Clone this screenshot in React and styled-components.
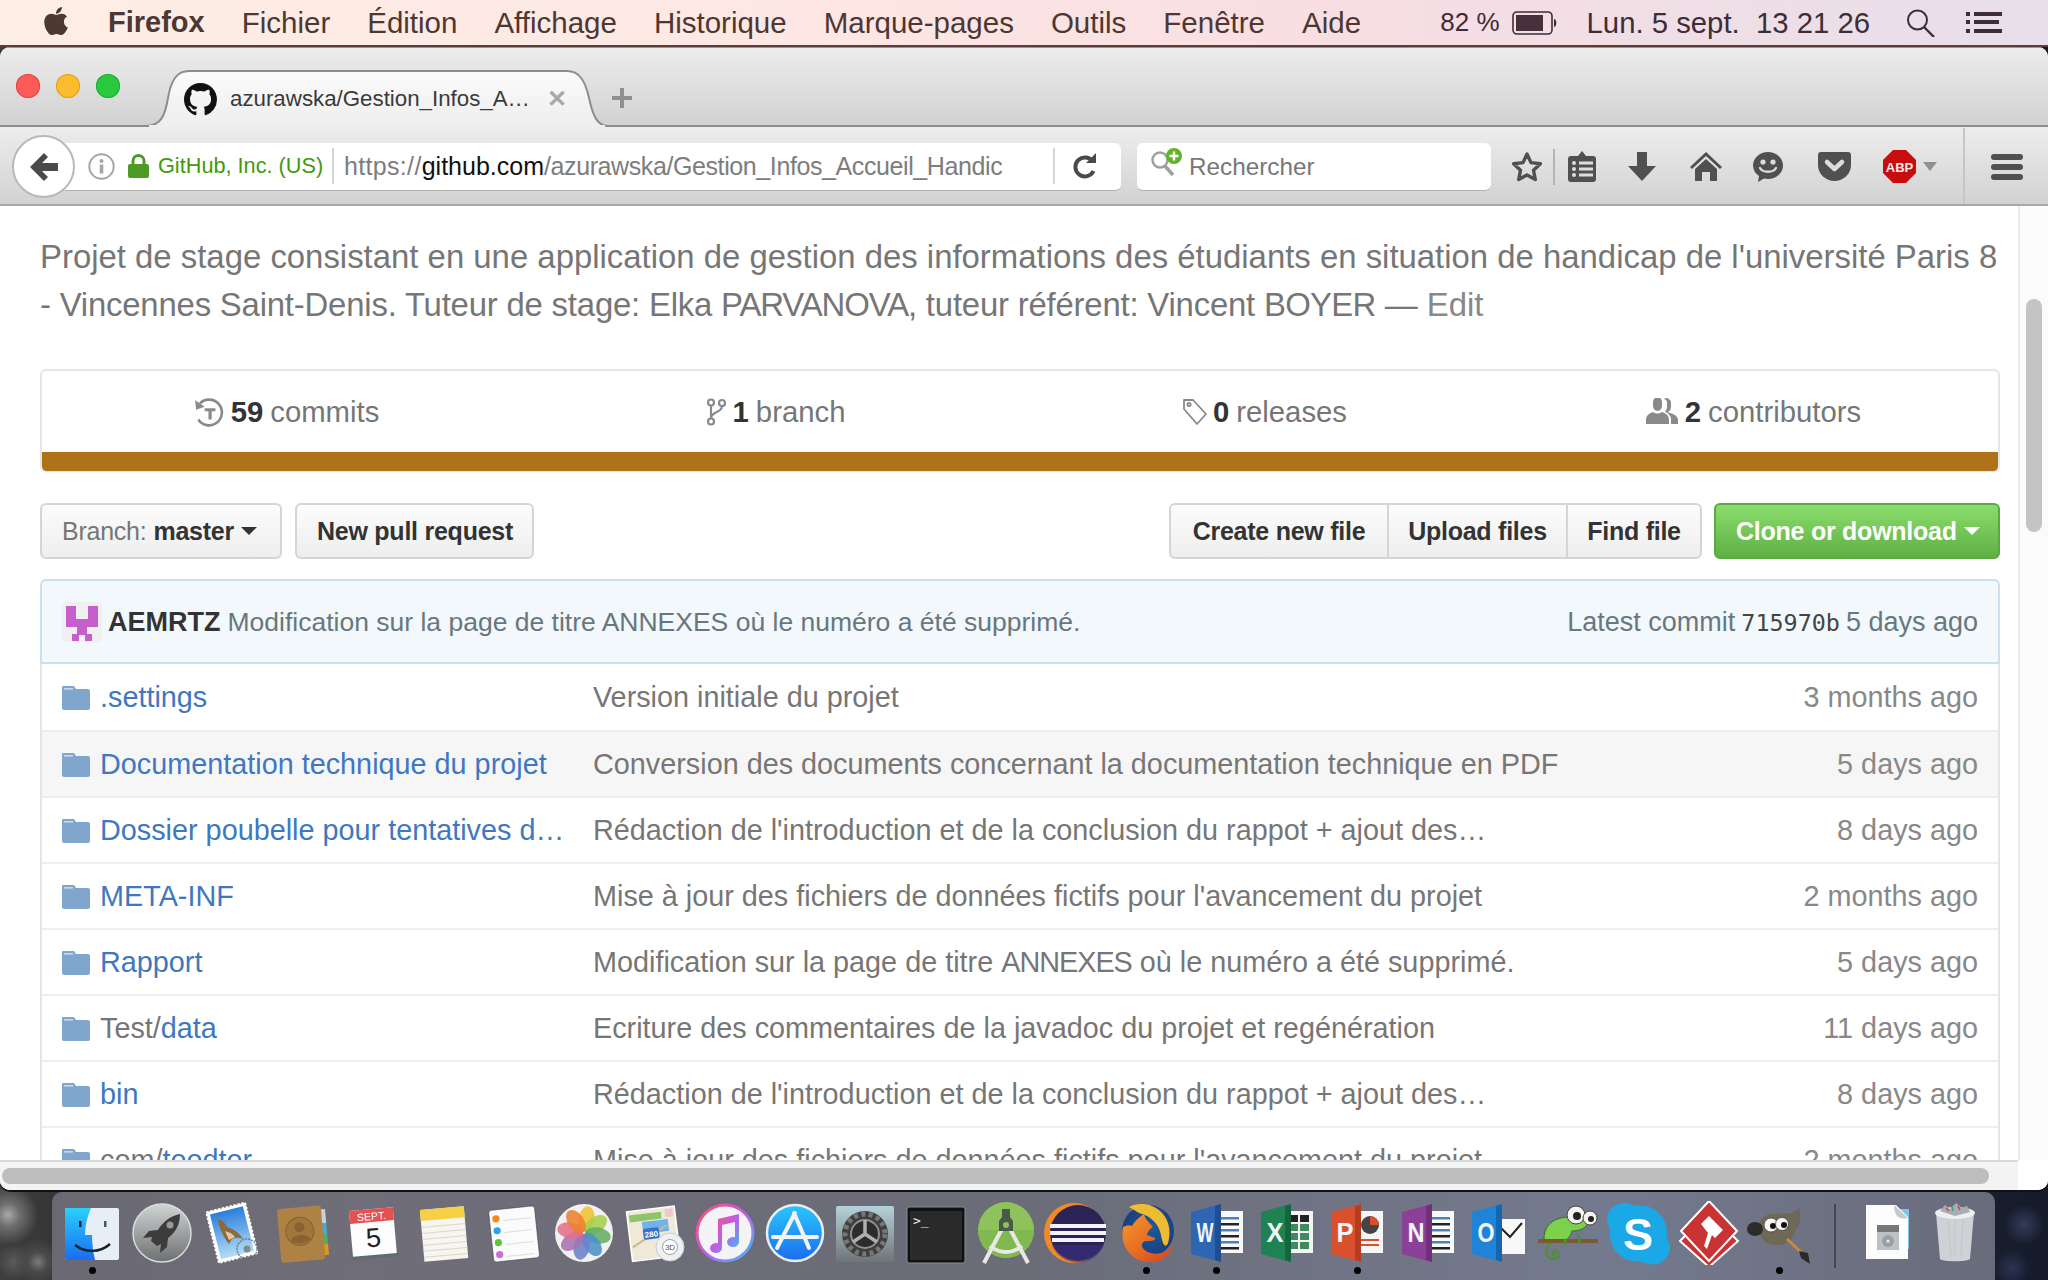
import React from "react";
import styled, { createGlobalStyle } from "styled-components";
import { FaApple } from "react-icons/fa";

const Global = createGlobalStyle`
  html, body { margin: 0; padding: 0; }
  body { width: 2048px; height: 1280px; overflow: hidden; font-family: "Liberation Sans", Arial, sans-serif; }
  * { box-sizing: border-box; }
`;

const Desktop = styled.div`
  width: 2048px; height: 1280px; overflow: hidden; display: flex; flex-direction: column;
  background:
    radial-gradient(circle at 8px 1215px, #a9a9a9 0, #6d6d6d 12px, transparent 30px),
    radial-gradient(circle at 38px 1262px, #7a7a7a 0, #4a4a4a 10px, transparent 24px),
    radial-gradient(circle at 14px 1262px, #5a5a5a 0, transparent 18px),
    radial-gradient(circle at 2024px 1225px, #333c5a 0, transparent 20px),
    radial-gradient(circle at 2012px 1268px, #2b3552 0, transparent 18px),
    linear-gradient(90deg, #3e3e3e 0, #353536 52px, #1d2233 1900px, #161b2c 100%);
`;

/* ---------- macOS menu bar ---------- */
const MenuBar = styled.div`
  height: 47px; flex: none; display: flex; align-items: center; padding: 0 46px 0 42px;
  font-size: 29.5px; color: #4c3732; border-bottom: 2px solid #5c3d3a;
  background: linear-gradient(90deg, #fdeee4 0, #fee8e4 35%, #f9dfe2 62%, #f3dee4 75%, #e7dfea 100%);
`;
const AppleMark = styled(FaApple)`width: 28px; height: 32px; margin: -4px 38px 0 0; color: #4c3a32;`;
const MenuItem = styled.span`
  margin-right: ${p => p.$gap ?? 37}px; font-weight: ${p => (p.$bold ? 700 : 400)}; white-space: nowrap;
  font-size: ${p => (p.$bold ? 29 : 29.5)}px;
`;
const MenuStatus = styled.div`margin-left: auto; display: flex; align-items: center; color: #3d2d38; font-size: 29.3px;`;
const StatusText = styled.span`margin-right: ${p => p.$gap}px; white-space: nowrap; font-size: ${p => p.$fs || 29.3}px;`;
const StatusIcon = styled.svg`display: block; flex: none; margin-right: ${p => p.$gap || 0}px;`;

/* ---------- Firefox window ---------- */
const Window = styled.div`
  width: 2048px; height: 1143px; flex: none; display: flex; flex-direction: column; overflow: hidden;
  border-radius: 10px 10px 10px 10px; background: #fff; box-shadow: 0 2px 0 #111;
`;
const TabBar = styled.div`
  height: 80px; flex: none; display: flex; align-items: flex-end; padding-left: 16px; position: relative;
  border-top: 1px solid #b9897d; border-bottom: 2px solid #8d8d8d;
  background: linear-gradient(#ececec, #d2d2d2);
`;
const Lights = styled.div`display: flex; gap: 16px; align-self: flex-start; margin: 26px 27px 0 0;`;
const Light = styled.span`
  width: 24px; height: 24px; border-radius: 50%; background: ${p => p.$c}; box-shadow: inset 0 0 0 1px ${p => p.$b};
`;
const Tab = styled.div`
  position: relative; width: 460px; height: 57px; margin-bottom: -2px; display: flex; align-items: center;
  padding: 1px 0 0 37px; color: #3a3a3a; font-size: 22.3px; z-index: 1;
`;
const TabShape = styled.svg`position: absolute; left: 0; top: 0; z-index: -1;`;
const TabTitle = styled.span`margin-left: 13px; width: 305px; white-space: nowrap; overflow: hidden;`;
const TabClose = styled.span`margin-left: 12px; color: #a8a8a8; font-size: 24px; font-weight: 700; line-height: 1;`;
const NewTab = styled.svg`margin: 0 0 17px 5px; display: block;`;

const NavBar = styled.div`
  height: 79px; flex: none; display: flex; align-items: center; position: relative;
  border-bottom: 2px solid #a8a8a8; padding-top: 2px;
  background: linear-gradient(#ededed, #d2d2d2);
`;
const BackButton = styled.div`
  width: 63px; height: 63px; margin-left: 12px; border-radius: 50%; background: #fff; flex: none; z-index: 1;
  border: 2px solid #b8b8b8; display: flex; align-items: center; justify-content: center;
`;
const UrlBar = styled.div`
  width: 1056px; height: 48px; margin-left: -10px; flex: none; display: flex; align-items: center;
  background: #fff; border-radius: 0 6px 6px 0; border-bottom: 1px solid #b0b0b0; padding-left: 23px;
`;
const SiteName = styled.span`color: #3f9a0c; font-size: 21.7px; margin-left: 9px; white-space: nowrap; width: 164px; flex: none;`;
const UrlSep = styled.span`width: 2px; height: 36px; background: #d4d4d4; flex: none; margin-left: ${p => p.$m}px;`;
const UrlText = styled.div`
  width: 658px; margin-left: 10px; overflow: hidden; white-space: nowrap; font-size: 25px; color: #7d7d7d; flex: none;
  padding-top: 1px; letter-spacing: -0.4px;
  b { font-weight: 400; color: #111; letter-spacing: 0; }
`;
const UrlScheme = styled.span`letter-spacing: 0.33px;`;
const SearchBox = styled.div`
  width: 354px; height: 48px; margin-left: 16px; flex: none; display: flex; align-items: center;
  background: #fff; border-radius: 6px; border-bottom: 1px solid #b0b0b0; padding-left: 13px;
  color: #777; font-size: 24.3px;
`;
const SearchLabel = styled.span`margin-left: 5px; padding-top: 1px;`;
const Slot = styled.div`
  width: ${p => p.$w}px; flex: none; display: flex; justify-content: center; align-items: center; position: relative;
  margin-left: ${p => p.$ml || 0}px;
`;
const ToolSep = styled.span`
  width: 2px; height: 36px; background: #b4b4b4; flex: none; margin-left: -1px; margin-right: -1px; z-index: 1;
`;
const NavDivider = styled.span`
  width: 2px; height: 76px; background: #c6c6c6; flex: none; margin-top: -2px; margin-left: 13px;
`;

/* ---------- GitHub page ---------- */
const PageRow = styled.div`flex: 1; min-height: 0; display: flex;`;
const Page = styled.div`
  width: 2018px; flex: none; overflow: hidden; padding: 27px 18px 0 40px; background: #fff;
  color: #333; font-size: 28.8px;
`;
const Description = styled.div`font-size: 32.9px; line-height: 48px; color: #767676; margin-bottom: 40px; width: 1960px;`;
const DescTail = styled.span`letter-spacing: -0.2px;`;
const Caps = styled.span`letter-spacing: ${p => p.$ls}px;`;
const EditLink = styled.span`color: #888;`;
const Stats = styled.div`
  height: 103px; border: 2px solid #e5e5e5; border-bottom-width: 1px; border-radius: 6px; overflow: hidden; display: flex; flex-direction: column;
`;
const StatCells = styled.div`flex: 1; display: flex;`;
const StatCell = styled.div`
  flex: 1; display: flex; align-items: center; justify-content: center; color: #767676; padding-top: 1px; font-size: 29.3px;
  b { color: #333; margin-right: 7px; }
  svg { margin-right: ${p => p.$gap || 7}px; }
`;
const LangBar = styled.div`height: 19px; background: #b07219; flex: none;`;
const Actions = styled.div`display: flex; margin-top: 31px; height: 56px;`;
const Btn = styled.div`
  height: 56px; padding: 0 ${p => p.$px ?? 20}px; display: flex; align-items: center; white-space: nowrap;
  font-size: 25px; letter-spacing: -0.25px; font-weight: 700; color: #333; border: 2px solid #d5d5d5; border-radius: 6px;
  width: ${p => p.$w}px; margin-left: ${p => p.$ml || 0}px;
  background: linear-gradient(#fcfcfc, #eee);
  span { color: #767676; font-weight: 400; margin-right: 7px; }
`;
const Caret = styled.i`
  width: 0; height: 0; margin-left: 7px; border-style: solid; border-width: 8px 8px 0; border-color: ${p => p.$c} transparent transparent;
`;
const BtnGroup = styled.div`display: flex; margin-left: auto;`;
const GroupBtn = styled(Btn)`
  border-radius: ${p => p.$r}; margin-left: ${p => (p.$first ? 0 : -2)}px; justify-content: center; padding: 0;
`;
const CloneBtn = styled(Btn)`
  color: #fff; border-color: #5ca941; background: linear-gradient(#8add6d, #60b044); margin-left: 12px; padding: 0 0 0 20px;
`;
const FileBox = styled.div`margin-top: 20px;`;
const CommitTease = styled.div`
  height: 85px; display: flex; align-items: center; padding: 1px 20px 0; font-size: 26.5px; color: #68777d;
  background: #f2f8fc; border: 2px solid #c9e1ee; border-radius: 6px 6px 0 0;
  b { color: #333; margin: 0 7px 0 6px; font-size: 27px; }
`;
const CommitMeta = styled.span`margin-left: auto; white-space: nowrap; font-size: 27px;`;
const Sha = styled.span`font-family: "DejaVu Sans Mono", monospace; font-size: 23.4px; color: #444; margin: 0 6px;`;
const Rows = styled.div`border-left: 2px solid #e5e5e5; border-right: 2px solid #e5e5e5;`;
const FileRow = styled.div`
  height: 66px; display: flex; align-items: center; padding: 1px 20px 0 20px; border-top: ${p => (p.$first ? 0 : 2)}px solid #eee;
  background: ${p => (p.$hover ? "#f6f6f6" : "#fff")};
`;
const FileName = styled.div`
  width: 493px; flex: none; margin-left: 10px; overflow: hidden; white-space: nowrap; text-overflow: ellipsis;
  color: #4078c0; padding-right: 28px;
  em { font-style: normal; color: #767676; }
`;
const FileMsg = styled.div`flex: 1; color: #767676; white-space: nowrap; overflow: hidden;`;
const FileAge = styled.div`color: #888; white-space: nowrap;`;

const VTrack = styled.div`flex: 1; background: #fbfbfb; border-left: 2px solid #e9e9e9; padding: 93px 6px 0 6px;`;
const VThumb = styled.div`width: 16px; height: 233px; border-radius: 8px; background: #c4c4c4;`;
const HRow = styled.div`height: 30px; flex: none; display: flex; background: #fff;`;
const HTrack = styled.div`
  width: 2018px; padding: 6px 29px 6px 2px; border-top: 2px solid #d9d9d9; background: #f4f4f4;
`;
const HThumb = styled.div`height: 16px; border-radius: 8px; background: #bdbdbd;`;

/* ---------- Dock ---------- */
const Dock = styled.div`
  width: 1943px; height: 88px; margin: 2px 0 0 52px; flex: none; display: flex; padding: 9px 0 0 5px;
  border-radius: 10px 10px 0 0;
  background: linear-gradient(90deg, #6a6872 0, #6f6d78 15%, #6a6c78 50%, #747a8e 80%, #686b7a 100%);
`;
const DockCell = styled.div`
  width: ${p => p.$w || 70.3}px; flex: none; display: flex; flex-direction: column; align-items: center;
`;
const DockDot = styled.span`
  width: 7px; height: 7px; border-radius: 50%; background: ${p => (p.$on ? "#000" : "transparent")}; margin-top: 2px; flex: none;
`;
const DockSep = styled.span`width: 2px; height: 64px; background: #44465a; margin: 3px 12px 0 20px; flex: none;`;

const Svg = ({ children, size = 64, ...r }) => (
  <svg width={size} height={size} viewBox="0 0 64 64" style={{ display: "block", flex: "none" }} {...r}>{children}</svg>
);

const GH = "M8 0C3.58 0 0 3.58 0 8c0 3.54 2.29 6.53 5.47 7.59.4.07.55-.17.55-.38 0-.19-.01-.82-.01-1.49-2.01.37-2.53-.49-2.69-.94-.09-.23-.48-.94-.82-1.13-.28-.15-.68-.52-.01-.53.63-.01 1.08.58 1.23.82.72 1.21 1.87.87 2.33.66.07-.52.28-.87.51-1.07-1.78-.2-3.64-.89-3.64-3.95 0-.87.31-1.59.82-2.15-.08-.2-.36-1.02.08-2.12 0 0 .67-.21 2.2.82.64-.18 1.32-.27 2-.27.68 0 1.36.09 2 .27 1.53-1.04 2.2-.82 2.2-.82.44 1.1.16 1.92.08 2.12.51.56.82 1.27.82 2.15 0 3.07-1.87 3.75-3.65 3.95.29.25.54.73.54 1.48 0 1.07-.01 1.93-.01 2.2 0 .21.15.46.55.38A8.013 8.013 0 0016 8c0-4.42-3.58-8-8-8z";

const Folder = () => (
  <svg width="28" height="24" viewBox="0 0 28 24" style={{ flex: "none", display: "block" }}>
    <path d="M1 0h11l2 3h12a2 2 0 012 2v17a2 2 0 01-2 2H2a2 2 0 01-2-2V1a1 1 0 011-1z" fill="#80a6cd" />
    <rect x="2" y="2" width="9" height="1.6" fill="#c9d9ea" />
  </svg>
);

/* ---------- toolbar icons ---------- */
const D = "#505050";
const Star = () => (
  <svg width="32" height="32" viewBox="0 0 32 32"><path d="M16 3l4 8.6 9.4 1.2-6.9 6.4 1.8 9.3L16 24l-8.3 4.5 1.8-9.3-6.9-6.4 9.4-1.2z" fill="none" stroke={D} strokeWidth="3.4" strokeLinejoin="round" /></svg>
);
const Clip = () => (
  <svg width="28" height="31" viewBox="0 0 28 31"><path d="M3 5h7l4-5 4 5h7a3 3 0 013 3v20a3 3 0 01-3 3H3a3 3 0 01-3-3V8a3 3 0 013-3z" fill={D} /><g fill="#ddd"><circle cx="6" cy="12" r="2" /><circle cx="6" cy="18" r="2" /><circle cx="6" cy="24" r="2" /><rect x="11" y="10.5" width="14" height="3" /><rect x="11" y="16.5" width="14" height="3" /><rect x="11" y="22.5" width="14" height="3" /></g></svg>
);
const Down = () => (
  <svg width="28" height="29" viewBox="0 0 28 29"><path d="M9 0h10v14h9L14 29 0 14h9z" fill={D} strokeLinejoin="round" /></svg>
);
const Home = () => (
  <svg width="32" height="29" viewBox="0 0 32 29"><path d="M16 0L0 15l2 2L16 4l14 13 2-2z" fill={D} /><path d="M16 7L5 17v12h7v-9h8v9h7V17z" fill={D} /></svg>
);
const Smile = () => (
  <svg width="30" height="30" viewBox="0 0 30 30"><path d="M15 0a15 13.5 0 0115 13.5A15 13.5 0 0115 27c-1.500 0-3-.2-4-.5L5 30l1-6A13.500 13.500 0 010 13.500 15 13.500 0 0115 0z" fill={D} /><circle cx="10" cy="10" r="2.600" fill="#ddd" /><circle cx="20" cy="10" r="2.600" fill="#ddd" /><path d="M7 16c3 5 13 5 16 0" stroke="#ddd" strokeWidth="2.400" fill="none" strokeLinecap="round" /></svg>
);
const Pocket = () => (
  <svg width="33" height="29" viewBox="0 0 33 29"><path d="M3 0h27a3 3 0 013 3v10a16.500 16 0 01-33 0V3a3 3 0 013-3z" fill={D} /><path d="M9 10l7.500 7L24 10" stroke="#ddd" strokeWidth="4.500" fill="none" strokeLinecap="round" strokeLinejoin="round" /></svg>
);
const Abp = () => (
  <svg width="33" height="33" viewBox="0 0 33 33"><path d="M10 0h13l10 10v13L23 33H10L0 23V10z" fill="#c70d0d" /><text x="16.500" y="21.500" textAnchor="middle" fill="#fff" fontSize="13" fontWeight="700" fontFamily="Liberation Sans" opacity=".92">ABP</text></svg>
);
const Burger = () => (
  <svg width="32" height="26" viewBox="0 0 32 26"><rect width="32" height="6" rx="3" fill={D} /><rect y="10" width="32" height="6" rx="3" fill={D} /><rect y="20" width="32" height="6" rx="3" fill={D} /></svg>
);

/* ---------- stat icons ---------- */
const HistoryIcon = () => (
  <svg width="30" height="30" viewBox="0 0 28 28" fill="none"><path d="M5.500 6A12 12 0 1 1 4 21" stroke="#8a8a8a" strokeWidth="2.400" /><path d="M1 3l1 9 8-3z" fill="#8a8a8a" /><path d="M10 10.500h10v2.800h-3.500V21h-3v-7.700H10z" fill="#8a8a8a" /></svg>
);
const BranchIcon = () => (
  <svg width="20" height="28" viewBox="0 0 20 28" fill="none" stroke="#8a8a8a" strokeWidth="2.200"><circle cx="5" cy="4.500" r="3" /><circle cx="5" cy="23.500" r="3" /><circle cx="16" cy="5" r="3" /><path d="M5 8v12M16 8c0 7-10 5-11 12" /></svg>
);
const TagIcon = () => (
  <svg width="26" height="28" viewBox="0 0 26 28" fill="none" stroke="#8a8a8a" strokeWidth="1.800"><path d="M2 2h9l13 14-9 10L2 11z" strokeLinejoin="round" /><circle cx="7" cy="6.500" r="1.600" /></svg>
);
const PeopleIcon = () => (
  <svg width="32" height="28" viewBox="0 0 32 28" fill="#8a8a8a"><path d="M7 4a4.500 5 0 019 0v4a4.500 5 0 01-9 0zM0 22c0-5 4-7 7-8 3 2 6 2 9 0 3 1 7 3 7 8v4H0z" /><path d="M18 1a4.500 5 0 017 3v5c0 3-2 5-4 5 4 1 11 3 11 8v4h-7v-5c0-3-3-6-6-7 1-2 2-3 2-5V4c0-1-.5-2-3-3z" /></svg>
);

/* ---------- dock icons ---------- */
const Finder = () => (
  <Svg>
    <defs><linearGradient id="fb" x1="0" y1="0" x2="0" y2="1"><stop offset="0" stopColor="#2ad0fb" /><stop offset="1" stopColor="#1a6cf0" /></linearGradient></defs>
    <rect x="5" y="7" width="54" height="52" rx="2" fill="#e8eef6" />
    <path d="M7 7h24c-4 9-6 18-6 27h7c0 8 1 17 3 25H7a2 2 0 01-2-2V9a2 2 0 012-2z" fill="url(#fb)" />
    <rect x="19" y="20" width="2.500" height="6" fill="#123" /><rect x="44" y="20" width="2.500" height="6" fill="#456" />
    <path d="M15 44c10 8 25 8 35-1" stroke="#123" strokeWidth="2.500" fill="none" />
  </Svg>
);
const Rocket = () => (
  <Svg>
    <defs><linearGradient id="rk" x1="0" y1="0" x2="0" y2="1"><stop offset="0" stopColor="#cfd4d4" /><stop offset="1" stopColor="#6e7070" /></linearGradient></defs>
    <circle cx="32" cy="32" r="29" fill="url(#rk)" stroke="#d8dddd" strokeWidth="1.500" />
    <path d="M50 13c-10 2-17 8-22 16l-9 1-6 7 9-1-1 4 6 5 4-2-1 9 7-6 1-9c8-6 12-14 12-24z" fill="#3c3c3c" />
    <circle cx="40" cy="24" r="3.500" fill="#999" />
  </Svg>
);
const Mail = () => (
  <Svg>
    <defs><linearGradient id="ml" x1="0" y1="0" x2="0" y2="1"><stop offset="0" stopColor="#2a7fdc" /><stop offset="1" stopColor="#b4dcf6" /></linearGradient></defs>
    <g transform="rotate(-14 30 32)">
      <rect x="11" y="6" width="40" height="52" fill="#fff" stroke="#fff" strokeWidth="2" strokeDasharray="2.500 1.500" />
      <rect x="14" y="9" width="34" height="46" fill="url(#ml)" />
    </g>
    <path d="M16 18c5 0 8 4 10 8 6 2 12 5 16 12-6-2-8-1-11 0l-3 5-3-4c-4-6-7-14-9-21z" fill="#8d6a3b" />
    <path d="M24 30c4 1 8 3 10 6l-6 3z" fill="#e0c9a0" />
    <circle cx="46" cy="48" r="10" fill="none" stroke="#6a6a70" strokeWidth="1.500" strokeDasharray="2 1" opacity=".8" />
    <circle cx="46" cy="48" r="3.500" fill="#777" opacity=".8" />
  </Svg>
);
const Contacts = () => (
  <Svg>
    <g transform="rotate(-5 32 32)">
      <rect x="50" y="10" width="6" height="14" fill="#c9d2d6" /><rect x="50" y="24" width="6" height="11" fill="#45a9d9" />
      <rect x="50" y="35" width="6" height="10" fill="#4fb05f" /><rect x="50" y="45" width="6" height="11" fill="#e0961f" />
      <rect x="8" y="6" width="44" height="54" rx="3" fill="#ae8245" />
      <circle cx="29" cy="30" r="14" fill="#a1763d" stroke="#8a6532" strokeWidth="1.200" />
      <circle cx="29" cy="26" r="5" fill="#886231" /><path d="M19 39c2-7 18-7 20 0-5 4-15 4-20 0z" fill="#886231" />
    </g>
  </Svg>
);
const Calendar = () => (
  <Svg>
    <g transform="rotate(-5 32 32)">
      <rect x="8" y="48" width="48" height="9" fill="#5d6d72" />
      <rect x="10" y="8" width="44" height="46" fill="#fdfdfd" />
      <rect x="10" y="8" width="44" height="13" fill="#e65050" />
      <text x="32" y="19" textAnchor="middle" fontSize="10.500" fill="#fff" fontFamily="Liberation Sans">SEPT.</text>
      <text x="32" y="46" textAnchor="middle" fontSize="27" fill="#222" fontFamily="Liberation Sans">5</text>
    </g>
  </Svg>
);
const Notes = () => (
  <Svg>
    <g transform="rotate(-5 32 32)">
      <rect x="10" y="7" width="44" height="52" fill="#f7f5ee" />
      <rect x="10" y="7" width="44" height="11" fill="#f8d044" />
      {[24, 30, 36, 42, 48, 54].map(y => <rect key={y} x="10" y={y} width="44" height="1" fill="#d8d6cf" />)}
    </g>
  </Svg>
);
const Reminders = () => (
  <Svg>
    <g transform="rotate(-6 32 32)">
      <rect x="9" y="7" width="46" height="52" rx="3" fill="#fbfbfb" stroke="#333" strokeWidth=".5" />
      {[["#f28a1f", 16], ["#27a4ee", 28], ["#5fc63a", 40], ["#c86fdc", 52]].map(([c, y]) => (
        <g key={y}><circle cx="15.500" cy={y} r="3.600" fill={c} /><rect x="22" y={y + 2} width="28" height="1" fill="#ddd" /></g>
      ))}
    </g>
  </Svg>
);
const Photos = () => (
  <Svg>
    <circle cx="32" cy="32" r="29" fill="#f1f1ef" />
    {["#f1c232", "#a5cf4f", "#63ae62", "#4b92c8", "#6b82c8", "#a86fb4", "#e2708a", "#ee8030"].map((c, i) => (
      <ellipse key={c} cx="32" cy="18" rx="8" ry="13" fill={c} opacity=".88" transform={`rotate(${i * 45 + 10} 32 32)`} />
    ))}
  </Svg>
);
const Maps = () => (
  <Svg>
    <g transform="rotate(-7 28 30)">
      <rect x="6" y="8" width="48" height="50" fill="#efe9d8" stroke="#fff" strokeWidth="1.500" />
      <rect x="8" y="12" width="32" height="7" fill="#8ec46a" />
      <rect x="20" y="20" width="26" height="12" fill="#6fb3e8" />
      <rect x="44" y="10" width="8" height="8" fill="#eec8cc" />
      <path d="M8 44L44 26" stroke="#cbb98a" strokeWidth="2" />
      <rect x="20" y="27" width="16" height="11" rx="2" fill="#3d6fc4" />
      <text x="28" y="36" textAnchor="middle" fontSize="8" fill="#fff" fontWeight="700" fontFamily="Liberation Sans">280</text>
    </g>
    <circle cx="47" cy="46" r="14" fill="#eef1f3" stroke="#c8ccd0" />
    <circle cx="47" cy="46" r="7.500" fill="#fff" stroke="#888" strokeWidth=".8" />
    <text x="47" y="49" textAnchor="middle" fontSize="8" fill="#555" fontFamily="Liberation Sans">3D</text>
  </Svg>
);
const ITunes = () => (
  <Svg>
    <defs><linearGradient id="it" x1="0" y1="0" x2="1" y2="1"><stop offset="0" stopColor="#fb4f6e" /><stop offset=".5" stopColor="#c45be6" /><stop offset="1" stopColor="#32c5f5" /></linearGradient></defs>
    <circle cx="32" cy="32" r="28" fill="#f4f3f6" stroke="url(#it)" strokeWidth="3" />
    <path d="M25 18l21-5v28a6 5 0 11-4-4.700V21l-13 3v23a6 5 0 11-4-4.700z" fill="url(#it)" />
  </Svg>
);
const AppStore = () => (
  <Svg>
    <defs><linearGradient id="as" x1="0" y1="0" x2="0" y2="1"><stop offset="0" stopColor="#2ac7fb" /><stop offset="1" stopColor="#1b6cf0" /></linearGradient></defs>
    <circle cx="32" cy="32" r="28" fill="url(#as)" stroke="#e8eef4" strokeWidth="2.500" />
    <g stroke="#f2f4f6" strokeLinecap="round" fill="none"><path d="M32 12L14 47M31 12l15 35" strokeWidth="4" /><path d="M10 36h44" strokeWidth="4" /></g>
  </Svg>
);
const SysPrefs = () => (
  <Svg>
    <defs><linearGradient id="sp" x1="0" y1="0" x2="0" y2="1"><stop offset="0" stopColor="#b5d2da" /><stop offset="1" stopColor="#6f7478" /></linearGradient></defs>
    <rect x="3" y="5" width="58" height="56" rx="2" fill="url(#sp)" />
    <circle cx="32" cy="33" r="23" fill="#3f3f3f" />
    <circle cx="32" cy="33" r="20" fill="none" stroke="#777" strokeWidth="5" strokeDasharray="4 3.500" />
    <circle cx="32" cy="33" r="14" fill="#2c2c2c" stroke="#8f8f8f" strokeWidth="2" />
    <g stroke="#b0b0b0" strokeWidth="3.500"><path d="M32 33V19M32 33l12 8M32 33l-12 8" /></g>
  </Svg>
);
const Terminal = () => (
  <Svg>
    <rect x="3" y="6" width="58" height="56" rx="2" fill="#111" stroke="#8a8f96" strokeWidth="1" />
    <rect x="6" y="10" width="52" height="49" fill="#2a2a2a" />
    <text x="9" y="24" fontSize="13" fill="#eee" fontFamily="DejaVu Sans Mono">&gt;_</text>
  </Svg>
);
const Android = () => (
  <Svg>
    <circle cx="32" cy="29" r="28" fill="#8ec25a" />
    <path d="M4 29h56a28 28 0 01-56 0z" fill="#82b850" />
    <g fill="none" stroke="#e8e8e4" strokeWidth="4"><path d="M30 24L10 62M34 24l20 38M16 45c10 8 22 8 32 0" /></g>
    <path d="M28 8h8v8l3 4v10h-14V20l3-4z" fill="#4a5a48" /><circle cx="32" cy="24" r="3" fill="#8ec25a" />
  </Svg>
);
const Eclipse = () => (
  <Svg>
    <circle cx="30" cy="32" r="30" fill="#f28a24" />
    <circle cx="34" cy="32" r="28" fill="#2c2255" />
    <path d="M8 44h52a28 28 0 01-52 0z" fill="#3d3180" opacity=".6" />
    <g fill="#f4f2fa"><rect x="6" y="23" width="56" height="4" /><rect x="6" y="30" width="56" height="4" /><rect x="8" y="37" width="52" height="4" /></g>
  </Svg>
);
const FirefoxIcon = () => (
  <Svg>
    <defs>
      <radialGradient id="ffb" cx=".55" cy=".45" r=".6"><stop offset="0" stopColor="#1a5c9c" /><stop offset="1" stopColor="#1c3a7a" /></radialGradient>
      <linearGradient id="ffo" x1="0" y1="0" x2="1" y2="1"><stop offset="0" stopColor="#f59b2c" /><stop offset="1" stopColor="#d8401f" /></linearGradient>
    </defs>
    <circle cx="33" cy="30" r="26" fill="url(#ffb)" />
    <path d="M14 6c8-5 22-4 30 3 9 7 13 20 9 33-3 7-6-1-7-8-2-10-9-19-22-22z" fill="#f9c22d" opacity=".95" />
    <path d="M8 26c-4 20 10 36 28 35 12 0 20-8 23-17-6 7-18 12-28 6-6-4-5-9 0-10 4 0 10 0 9-3l-8-3c0-3 4-7 6-8-5-6-8-8-9-13-6 4-10 8-12 12-3-1-5-1-6 0 0 0-2 0-3 1z" fill="url(#ffo)" />
  </Svg>
);
const Office = ({ c1, c2, letter, doc }) => (
  <Svg>
    {doc === "lines" && <g><rect x="28" y="10" width="30" height="42" fill="#f8f8f8" />{[16, 22, 28, 34, 40, 46].map(y => <rect key={y} x="34" y={y} width="20" height="2.500" fill={y % 12 === 4 ? "#4e7fbf" : "#222"} />)}</g>}
    {doc === "sheet" && <g><rect x="28" y="10" width="30" height="42" fill="#f4f4f4" /><g fill="#3f8a5f">{[14, 23, 32, 41].map(y => [34, 45].map(x => <rect key={x + "-" + y} x={x} y={y} width="9" height="7" fill={y === 14 ? "#222" : "#3f8a5f"} />))}</g></g>}
    {doc === "slide" && <g><rect x="28" y="10" width="30" height="42" fill="#f6f6f6" /><circle cx="45" cy="24" r="9" fill="#444" /><path d="M45 24V15a9 9 0 019 9z" fill="#d9502e" /><rect x="36" y="38" width="18" height="2" fill="#d9502e" /><rect x="36" y="43" width="18" height="2" fill="#d9502e" /></g>}
    {doc === "mail" && <g><rect x="30" y="18" width="29" height="35" fill="#f8f8f8" /><path d="M33 25l11 11 12-14" stroke="#222" strokeWidth="2" fill="none" /></g>}
    <path d="M6 11L36 3v58L6 53z" fill={c1} />
    <path d="M36 3v58L30 59V5z" fill={c2} />
    <text x="20" y="41" textAnchor="middle" fontSize="27" fontWeight="700" fill="#f2f6fa" fontFamily="Liberation Sans" textLength="17" lengthAdjust="spacingAndGlyphs">{letter}</text>
  </Svg>
);
const Chameleon = () => (
  <Svg>
    <path d="M8 38c0-14 10-22 26-22 8 0 14 2 18 6-2 5-8 8-16 8-2 7-6 10-12 10-6 0-12 2-16-2z" fill="#7bd04c" stroke="#3f6b28" strokeWidth="1" />
    <circle cx="40" cy="14" r="9" fill="#f4f4ee" stroke="#444" /><circle cx="41" cy="15" r="4" fill="#222" />
    <circle cx="54" cy="17" r="7" fill="#f4f4ee" stroke="#444" /><circle cx="55" cy="18" r="3" fill="#222" />
    <rect x="2" y="38" width="60" height="4" rx="1" fill="#7a5a2e" />
    <path d="M16 42c-8 4-8 16 2 16 6 0 6-8 1-8-3 0-3 4 0 4" fill="none" stroke="#4f8f34" strokeWidth="2.500" />
    <path d="M30 38l-2 6M42 34l2 8" stroke="#4f8f34" strokeWidth="3" />
  </Svg>
);
const Skype = () => (
  <Svg>
    <path d="M18 2c4 0 7 1 10 3 2-.5 3-.5 5-.5 15 0 27 12 27 27 0 2 0 4-.5 5 2 3 3.500 6 3.500 10 0 9-8 17-17 17-4 0-8-1-11-3H30C15 60 3 48 3 33c0-2 0-4 .5-5C2 25 0 22 0 18 0 9 8 2 18 2z" fill="#1ba8e6" />
    <text x="31" y="49" textAnchor="middle" fontSize="45" fontWeight="700" fill="#fff" fontFamily="Liberation Sans">S</text>
  </Svg>
);
const RedDiamond = () => (
  <Svg>
    <path d="M3 40l8-8 21 22 21-22 8 8-29 26z" fill="#c93333" stroke="#fff" strokeWidth="2" />
    <path d="M32 0l28 30-28 30L4 30z" fill="#c93333" stroke="#fff" strokeWidth="2" />
    <path d="M24 23l8-8 14 14-8 8-3-3-5 14-3-3 4-13z" fill="#fff" />
  </Svg>
);
const Gimp = () => (
  <Svg>
    <path d="M12 22c4-7 10-10 18-9l8-1c6 2 10-1 14-6 2 8 2 18-4 24-2 8-8 14-18 14-10 0-16-5-18-14z" fill="#6e6856" />
    <ellipse cx="8" cy="28" rx="8" ry="7" fill="#2c2c2c" />
    <circle cx="24" cy="24" r="7" fill="#f6f6f0" stroke="#333" strokeWidth=".7" /><circle cx="26" cy="25" r="3" fill="#111" />
    <circle cx="35" cy="23" r="6.500" fill="#f6f6f0" stroke="#333" strokeWidth=".7" /><circle cx="37" cy="24" r="3" fill="#111" />
    <path d="M40 38l16 15" stroke="#c98a3a" strokeWidth="3" /><path d="M52 50l9 2 2 11-9-6z" fill="#2a2a2a" />
  </Svg>
);
const Downloads = () => (
  <Svg>
    <rect x="48" y="8" width="9" height="40" fill="#7cc4ea" />
    <path d="M14 4h30l12 12v42H14z" fill="#fdfdfd" />
    <path d="M42 4l14 13c-5 1-9 0-11-2-2-3-3-6-3-11z" fill="#c8c8c8" />
    <rect x="25" y="24" width="22" height="7" fill="#777" /><rect x="25" y="31" width="22" height="18" fill="#bcc2c4" />
    <circle cx="36" cy="40" r="6" fill="#9aa0a4" /><circle cx="36" cy="40" r="1.500" fill="#eee" />
  </Svg>
);
const Trash = () => (
  <Svg>
    <path d="M14 12h38l-4 46c-2 3-28 3-30 0z" fill="#d8dadd" opacity=".92" />
    <ellipse cx="33" cy="12" rx="20" ry="6" fill="#eceef0" />
    <path d="M18 10l5-6 5 4 6-6 6 5 5-2 3 6-15 4z" fill="#a8adb2" />
    <path d="M24 7l3 3M36 5l2 4" stroke="#c44" strokeWidth="1.500" /><path d="M30 6l1 4" stroke="#2a8" strokeWidth="1.500" />
    <path d="M26 18l3 36M33 18v37M41 18l-2 36" stroke="#c3c6c9" strokeWidth="1" />
  </Svg>
);

const DOCK = [
  [Finder, 1], [Rocket], [Mail], [Contacts], [Calendar], [Notes], [Reminders], [Photos], [Maps], [ITunes], [AppStore], [SysPrefs],
  [Terminal], [Android], [Eclipse], [FirefoxIcon, 1],
  [() => <Office c1="#2f66b2" c2="#1f4e94" letter="W" doc="lines" />, 1],
  [() => <Office c1="#1f8252" c2="#15653e" letter="X" doc="sheet" />],
  [() => <Office c1="#d9502e" c2="#b63e20" letter="P" doc="slide" />, 1],
  [() => <Office c1="#8c3f97" c2="#6f2f7a" letter="N" doc="lines" />],
  [() => <Office c1="#1f83d8" c2="#1566b0" letter="O" doc="mail" />],
  [Chameleon], [Skype], [RedDiamond], [Gimp, 1],
];

const FILES = [
  [".settings", "Version initiale du projet", "3 months ago"],
  ["Documentation technique du projet", "Conversion des documents concernant la documentation technique en PDF", "5 days ago"],
  ["Dossier poubelle pour tentatives de compilation", "Rédaction de l'introduction et de la conclusion du rappot + ajout des…", "8 days ago"],
  ["META-INF", "Mise à jour des fichiers de données fictifs pour l'avancement du projet", "2 months ago"],
  ["Rapport", <>Modification sur la page de titre <Caps $ls={-1}>ANNEXES</Caps> où le numéro a été supprimé.</>, "5 days ago"],
  [<><em>Test/</em>data</>, "Ecriture des commentaires de la javadoc du projet et regénération", "11 days ago"],
  ["bin", "Rédaction de l'introduction et de la conclusion du rappot + ajout des…", "8 days ago"],
  [<><em>com/</em>toodtor</>, "Mise à jour des fichiers de données fictifs pour l'avancement du projet", "2 months ago"],
];

export default function App() {
  return (
    <Desktop>
      <Global />
      <MenuBar>
        <AppleMark />
        <MenuItem $bold>Firefox</MenuItem>
        <MenuItem>Fichier</MenuItem>
        <MenuItem>Édition</MenuItem>
        <MenuItem>Affichage</MenuItem>
        <MenuItem>Historique</MenuItem>
        <MenuItem>Marque-pages</MenuItem>
        <MenuItem>Outils</MenuItem>
        <MenuItem>Fenêtre</MenuItem>
        <MenuItem>Aide</MenuItem>
        <MenuStatus>
          <StatusText $gap={12} $fs={26}>82 %</StatusText>
          <StatusIcon width="46" height="24" viewBox="0 0 46 24" $gap={29}>
            <rect x="1" y="1" width="39" height="22" rx="4" fill="none" stroke="#3d2d38" strokeWidth="1.600" />
            <rect x="4" y="4" width="27" height="16" fill="#46303a" />
            <path d="M42 8c3 0 3 8 0 8z" fill="#3d2d38" />
          </StatusIcon>
          <StatusText $gap={36}>Lun. 5 sept.&nbsp;&nbsp;13 21 26</StatusText>
          <StatusIcon width="29" height="28" viewBox="0 0 29 28" $gap={31}>
            <circle cx="11.500" cy="11" r="9.500" fill="none" stroke="#3d2d38" strokeWidth="2" />
            <path d="M18 18l10 10" stroke="#3d2d38" strokeWidth="2.400" />
          </StatusIcon>
          <StatusIcon width="36" height="21" viewBox="0 0 36 21">
            <g fill="#3d2d38"><rect width="4" height="4" /><rect y="8" width="4" height="4" /><rect y="17" width="4" height="4" /><rect x="8" width="28" height="4" /><rect x="8" y="8" width="25" height="4" /><rect x="8" y="17" width="28" height="4" /></g>
          </StatusIcon>
        </MenuStatus>
      </MenuBar>

      <Window>
        <TabBar>
          <Lights>
            <Light $c="#fc5b57" $b="#e2463f" />
            <Light $c="#fdbc2e" $b="#dfa023" />
            <Light $c="#28c83f" $b="#1dad2b" />
          </Lights>
          <Tab>
            <TabShape width="460" height="57" viewBox="0 0 460 57">
              <defs><linearGradient id="tabg" x1="0" y1="0" x2="0" y2="1"><stop offset="0" stopColor="#fbfbfb" /><stop offset="1" stopColor="#eeeeee" /></linearGradient></defs>
              <path d="M0 56C14 55 18 46 21 28 24 10 30 1 42 1H420C432 1 438 10 442 28 446 46 450 55 460 56z" fill="url(#tabg)" stroke="#8d8d8d" strokeWidth="2" />
              <rect x="2" y="55" width="456" height="2" fill="#eeeeee" />
            </TabShape>
            <svg width="33" height="33" viewBox="0 0 16 16" style={{ flex: "none" }}><path d={GH} fill="#111" /></svg>
            <TabTitle>azurawska/Gestion_Infos_A…</TabTitle>
            <TabClose>✕</TabClose>
          </Tab>
          <NewTab width="20" height="20" viewBox="0 0 20 20"><rect x="8" width="4" height="20" fill="#8f8f8f" /><rect y="8" width="20" height="4" fill="#8f8f8f" /></NewTab>
        </TabBar>

        <NavBar>
          <BackButton>
            <svg width="28" height="30" viewBox="0 0 28 30"><path d="M14 1l4 4-6 6h16v8H12l6 6-4 4L0 15z" fill="#4a4a4a" /></svg>
          </BackButton>
          <UrlBar>
            <svg width="27" height="27" viewBox="0 0 27 27" style={{ flex: "none" }}><circle cx="13.500" cy="13.500" r="12.200" fill="#fff" stroke="#a6a6a6" strokeWidth="2" /><circle cx="13.500" cy="8" r="2" fill="#a6a6a6" /><rect x="11.700" y="11.500" width="3.600" height="9" fill="#a6a6a6" /></svg>
            <svg width="21" height="24" viewBox="0 0 21 24" style={{ flex: "none", marginLeft: 13 }}><path d="M5 11V7a5.500 5.500 0 0111 0v4" fill="none" stroke="#4e9a25" strokeWidth="3" /><rect y="10" width="21" height="14" rx="2" fill="#4e9a25" /></svg>
            <SiteName>GitHub, Inc. (US)</SiteName>
            <UrlSep $m={10} />
            <UrlText><UrlScheme>https://</UrlScheme><b>github.com</b>/azurawska/Gestion_Infos_Accueil_Handicap</UrlText>
            <UrlSep $m={51} />
            <svg width="24" height="26" viewBox="0 0 24 26" style={{ flex: "none", marginLeft: 18 }}><path d="M20 9a9.500 9.500 0 10.500 9" fill="none" stroke="#4a4a4a" strokeWidth="4" /><path d="M13 10h10V0z" fill="#4a4a4a" /></svg>
          </UrlBar>
          <SearchBox>
            <svg width="34" height="32" viewBox="0 0 34 32" style={{ flex: "none", marginTop: -4 }}>
              <circle cx="10" cy="12" r="7.500" fill="none" stroke="#a0a0a0" strokeWidth="2.500" /><path d="M15 18l8 9" stroke="#a0a0a0" strokeWidth="3.500" />
              <circle cx="24" cy="8" r="8" fill="#62b32a" /><path d="M24 3.500v9M19.500 8h9" stroke="#fff" strokeWidth="2.400" />
            </svg>
            <SearchLabel>Rechercher</SearchLabel>
          </SearchBox>
          <Slot $w={55} $ml={8}><Star /></Slot>
          <ToolSep />
          <Slot $w={56}><Clip /></Slot>
          <Slot $w={64}><Down /></Slot>
          <Slot $w={64}><Home /></Slot>
          <Slot $w={60}><Smile /></Slot>
          <Slot $w={72}><Pocket /></Slot>
          <Slot $w={80}><Abp /><svg width="14" height="9" viewBox="0 0 14 9" style={{ marginLeft: 7 }}><path d="M0 0h14L7 9z" fill="#8f8f8f" /></svg></Slot>
          <NavDivider />
          <Slot $w={84}><Burger /></Slot>
        </NavBar>

        <PageRow>
          <Page>
            <Description>
              Projet de stage consistant en une application de gestion des informations des étudiants en situation de handicap de l'université Paris 8 <DescTail>- Vincennes Saint-Denis. Tuteur de stage: Elka <Caps $ls={-1.1}>PARVANOVA</Caps>, tuteur référent: Vincent <Caps $ls={-0.7}>BOYER</Caps></DescTail> — <EditLink>Edit</EditLink>
            </Description>
            <Stats>
              <StatCells>
                <StatCell><HistoryIcon /><b>59</b>commits</StatCell>
                <StatCell><BranchIcon /><b>1</b>branch</StatCell>
                <StatCell $gap={5}><TagIcon /><b>0</b>releases</StatCell>
                <StatCell><PeopleIcon /><b>2</b>contributors</StatCell>
              </StatCells>
              <LangBar />
            </Stats>
            <Actions>
              <Btn $w={242}><span>Branch:</span>master<Caret $c="#333" /></Btn>
              <Btn $w={239} $ml={13}>New pull request</Btn>
              <BtnGroup>
                <GroupBtn $first $w={220} $r="6px 0 0 6px">Create new file</GroupBtn>
                <GroupBtn $w={181} $r="0">Upload files</GroupBtn>
                <GroupBtn $w={136} $r="0 6px 6px 0">Find file</GroupBtn>
              </BtnGroup>
              <CloneBtn $w={286}>Clone or download<Caret $c="#fff" /></CloneBtn>
            </Actions>
            <FileBox>
              <CommitTease>
                <svg width="40" height="40" viewBox="0 0 40 40" style={{ flex: "none", borderRadius: 4 }}>
                  <rect width="40" height="40" fill="#f0f0f0" />
                  <g fill="#c55fcb"><rect x="4" y="4" width="10" height="21" /><rect x="26" y="4" width="10" height="21" /><rect x="4" y="17" width="32" height="8" /><rect x="15" y="25" width="10" height="8" /><rect x="10" y="32" width="7" height="7" /><rect x="23" y="32" width="7" height="7" /></g>
                </svg>
                <b>AEMRTZ</b>Modification sur la page de titre ANNEXES où le numéro a été supprimé.
                <CommitMeta>Latest commit<Sha>715970b</Sha>5 days ago</CommitMeta>
              </CommitTease>
              <Rows>
                {FILES.map(([name, msg, age], i) => (
                  <FileRow key={i} $first={i === 0} $hover={i === 1}>
                    <Folder />
                    <FileName>{name}</FileName>
                    <FileMsg>{msg}</FileMsg>
                    <FileAge>{age}</FileAge>
                  </FileRow>
                ))}
              </Rows>
            </FileBox>
          </Page>
          <VTrack><VThumb /></VTrack>
        </PageRow>
        <HRow><HTrack><HThumb /></HTrack></HRow>
      </Window>

      <Dock>
        {DOCK.map(([Icon, on], i) => (
          <DockCell key={i}><Icon /><DockDot $on={on} /></DockCell>
        ))}
        <DockSep />
        <DockCell><Downloads /></DockCell>
        <DockCell><Trash /></DockCell>
      </Dock>
    </Desktop>
  );
}
